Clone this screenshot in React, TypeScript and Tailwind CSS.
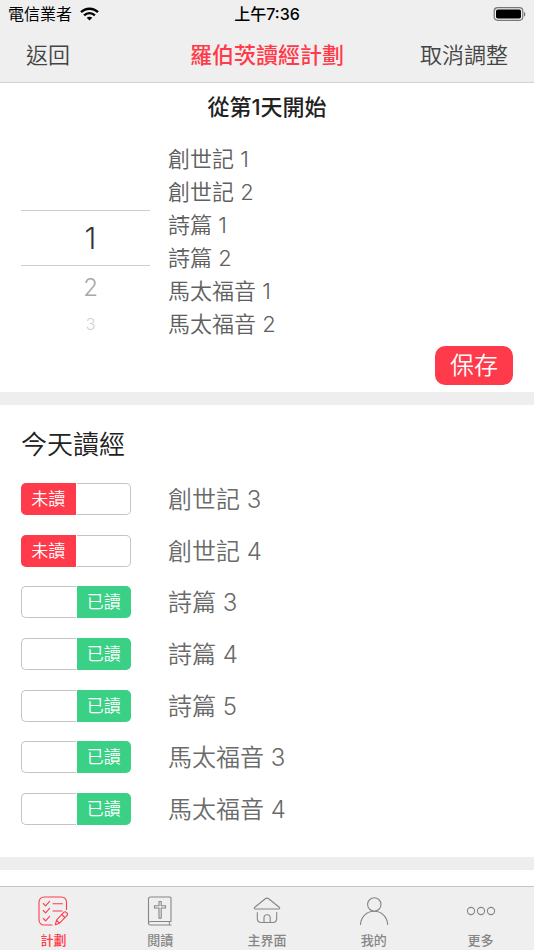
import { useState } from "react";
import type { ReactNode } from "react";

const startChapters = [
  "創世記 1",
  "創世記 2",
  "詩篇 1",
  "詩篇 2",
  "馬太福音 1",
  "馬太福音 2",
];

const todayChapters = [
  { title: "創世記 3", read: false },
  { title: "創世記 4", read: false },
  { title: "詩篇 3", read: true },
  { title: "詩篇 4", read: true },
  { title: "詩篇 5", read: true },
  { title: "馬太福音 3", read: true },
  { title: "馬太福音 4", read: true },
];

function TabIcon({ children }: { children: ReactNode }) {
  return (
    <svg
      className="h-[30px] w-[30px]"
      viewBox="0 0 30 30"
      fill="none"
      stroke="currentColor"
      strokeWidth="1.1"
      strokeLinecap="round"
      strokeLinejoin="round"
      aria-hidden="true"
    >
      {children}
    </svg>
  );
}

const tabs = [
  {
    label: "計劃",
    href: "#plan",
    active: true,
    icon: (
      <TabIcon>
        <path d="M14 29H6.500C3 29 1 27 1 23.500V6.500C1 3 3 1 6.500 1h16.500C26.500 1 28.500 3 28.500 6.500V13.500" />
        <path d="M5.300 7.500l2.300 2.300 4-4.500M5.300 14.500l2.300 2.300 4-4.500M5.300 22.500l2.300 2.300 4-4.500M15 7.800h9.500M15 15h9" />
        <path d="M17.300 28.800l1.200-4.600 7.200-7.800c.8-.8 1.800-.8 2.600 0l.6.6c.8.8.8 1.800 0 2.600l-7.400 7.600zM23.700 18.500l3.200 3.200M18.500 24.200l3 3" />
      </TabIcon>
    ),
  },
  {
    label: "閱讀",
    href: "#read",
    active: false,
    icon: (
      <TabIcon>
        <path d="M3.500 27V3c0-1.200.8-2 2-2h19.500c.6 0 1 .4 1 1v23.500H5.500c-1.100 0-2 .7-2 1.700s.9 1.800 2 1.800H26M24.800 25.500c-.8 1-.8 2.500 0 3.500" />
        <path d="M14 5.500h2.200v4.300h4.300V12h-4.300v10.300H14V12H9.500V9.800H14z" />
      </TabIcon>
    ),
  },
  {
    label: "主界面",
    href: "#home",
    active: false,
    icon: (
      <TabIcon>
        <path d="M2.800 11.200L13 3c1.200-1 2.800-1 4 0l10.200 8.200c.9.800.6 1.800-.6 1.800H3.400c-1.200 0-1.500-1-.6-1.800z" />
        <path d="M5.300 16.500v6c0 2.700 1.300 4 4 4h11.400c2.700 0 4-1.300 4-4v-6M12 26.500v-4.700c0-4 6.200-4 6.200 0v4.700" />
      </TabIcon>
    ),
  },
  {
    label: "我的",
    href: "#mine",
    active: false,
    icon: (
      <TabIcon>
        <circle cx="15.300" cy="8.500" r="6.700" />
        <path d="M1.500 28.500C2 20.500 8 15.300 15.200 15.300S28 20.500 28.700 28.500" />
      </TabIcon>
    ),
  },
  {
    label: "更多",
    href: "#more",
    active: false,
    icon: (
      <TabIcon>
        <circle cx="5" cy="15" r="3.600" />
        <circle cx="15" cy="15" r="3.600" />
        <circle cx="25" cy="15" r="3.600" />
      </TabIcon>
    ),
  },
];

function StatusBar() {
  return (
    <div className="grid h-7 grid-cols-3 items-center px-2 text-[16px] leading-5 font-medium text-black">
      <div className="flex items-center gap-2 font-normal">
        <span>電信業者</span>
        <svg className="h-[14px] w-[19px]" viewBox="0 0 19 14" fill="none" stroke="currentColor" aria-hidden="true">
          <path d="M1 5.200C5.800.5 13.200.5 18 5.200" strokeWidth="2.400" />
          <path d="M4.100 8.300C7.200 5.400 11.800 5.400 14.900 8.300" strokeWidth="2.400" />
          <path d="M6.700 10.800c1.600-1.500 4-1.500 5.600 0L9.500 13.600z" fill="currentColor" stroke="none" />
        </svg>
      </div>
      <span className="text-center">上午7:36</span>
      <svg className="h-[15px] w-[34px] justify-self-end" viewBox="0 0 34 15" aria-hidden="true">
        <rect x="2.200" y="0.700" width="28.600" height="12.600" rx="3.500" fill="none" stroke="#777" strokeWidth="1.200" />
        <rect x="4" y="2.500" width="25" height="9" rx="1.800" fill="#000" />
        <path d="M32 5v4.500c1.800-.6 1.800-3.900 0-4.500z" fill="#777" />
      </svg>
    </div>
  );
}

function DayPicker() {
  return (
    <div className="flex w-[129px] flex-col pt-[67px]" role="listbox" aria-label="從第1天開始">
      <button role="option" aria-selected="true" className="h-14 border-y border-[#cecece] pl-[10px] text-[30px] text-[#333]">
        1
      </button>
      <button role="option" aria-selected="false" className="h-11 pl-[10px] text-[24px] text-[#a8a8a8]">
        2
      </button>
      <button role="option" aria-selected="false" className="h-7 pl-[10px] text-[16px] text-[#d0d0d0]">
        3
      </button>
    </div>
  );
}

interface ReadingRowProps {
  title: string;
  read: boolean;
  onToggle: () => void;
}

function ReadingRow({ title, read, onToggle }: ReadingRowProps) {
  return (
    <li>
      <label className="flex h-8 cursor-pointer items-center">
        <input type="checkbox" className="sr-only" checked={read} onChange={onToggle} />
        <span className="grid h-8 w-[110px] grid-cols-2 gap-px text-center text-[17px] leading-8 text-white">
          {read ? (
            <>
              <span className="rounded-l-[5px] border border-r-0 border-[#c4c4c4]" />
              <span className="rounded-r-[5px] bg-[#3ad186]">已讀</span>
            </>
          ) : (
            <>
              <span className="rounded-l-[5px] bg-[#ff3b4b]">未讀</span>
              <span className="rounded-r-[5px] border border-l-0 border-[#c4c4c4]" />
            </>
          )}
        </span>
        <span className="pt-0.5 pl-[37px] text-[24px] leading-8 text-[#6a6a6a]">{title}</span>
      </label>
    </li>
  );
}

export default function App() {
  const [chapters, setChapters] = useState(todayChapters);

  const toggleChapter = (index: number) => {
    setChapters(chapters.map((c, i) => (i === index ? { ...c, read: !c.read } : c)));
  };

  return (
    <div className="flex min-h-screen flex-col bg-white font-['Inter','Noto_Sans_CJK_TC',sans-serif] font-[350]">
      {/* Header */}
      <header className="border-b border-[#d2d2d2] bg-[#efefef]">
        <StatusBar />
        <div className="flex h-[54px] items-center justify-between px-[26px] text-[22px] leading-8 text-[#444]">
          <button className="flex-1 text-left">返回</button>
          <h1 className="font-medium text-[#ff3b4b]">羅伯茨讀經計劃</h1>
          <button className="flex-1 text-right">取消調整</button>
        </div>
      </header>

      <main className="flex flex-1 flex-col">
        {/* Start day */}
        <section className="px-[21px] pt-[10px] pb-[7px]">
          <h2 className="text-center text-[22px] leading-7 font-medium text-[#222]">從第1天開始</h2>
          <div className="mt-[22px] flex gap-[18px]">
            <DayPicker />
            <ul className="text-[22px] leading-[33px] text-[#606060]">
              {startChapters.map((chapter) => (
                <li key={chapter}>{chapter}</li>
              ))}
            </ul>
          </div>
          <div className="mt-[5px] flex justify-end">
            <button className="h-[39px] rounded-[10px] bg-[#ff3b4b] px-[15px] text-[24px] leading-8 text-white">
              保存
            </button>
          </div>
        </section>

        {/* Today */}
        <section className="flex flex-1 flex-col border-y-[13px] border-[#eee] px-[21px] pt-[22px] pb-8">
          <h2 className="text-[26px] leading-9 text-[#222]">今天讀經</h2>
          <ul className="mt-5 flex flex-1 flex-col justify-between">
            {chapters.map((chapter, index) => (
              <ReadingRow
                key={chapter.title}
                title={chapter.title}
                read={chapter.read}
                onToggle={() => toggleChapter(index)}
              />
            ))}
          </ul>
        </section>
      </main>

      {/* Tabs */}
      <nav className="mt-4 grid grid-cols-5 border-t border-[#c6c6c6] bg-[#efefef] pt-[9px]">
        {tabs.map((tab) => (
          <a
            key={tab.label}
            href={tab.href}
            className={`${
              tab.active ? "text-[#ff3b4b]" : "text-[#868686]"
            } flex flex-col items-center gap-1 text-[13px] leading-5 font-medium`}
          >
            {tab.icon}
            {tab.label}
          </a>
        ))}
      </nav>
    </div>
  );
}
